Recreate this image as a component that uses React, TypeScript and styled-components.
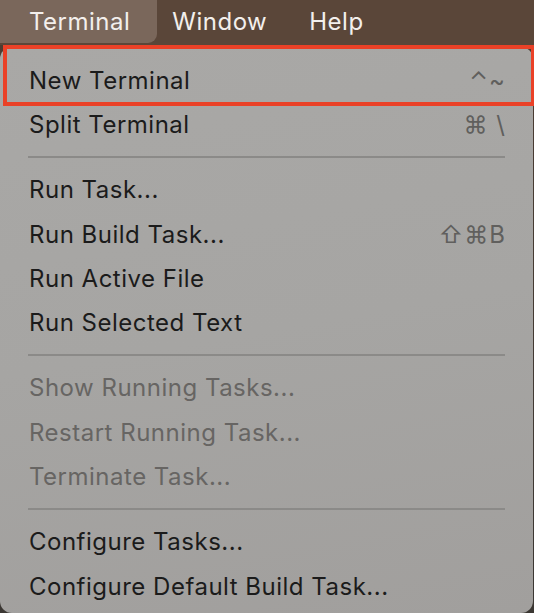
import React from "react";
import styled, { createGlobalStyle } from "styled-components";

const Global = createGlobalStyle`
  html, body { margin: 0; padding: 0; }
  body { background: #4a3b31; font-family: Inter, "Noto Sans", "DejaVu Sans", sans-serif; }
`;

const Page = styled.div`
  position: relative;
  width: 534px;
  height: 613px;
  overflow: hidden;
  display: flex;
  flex-direction: column;
  background: linear-gradient(180deg, #4d3d32 0%, #3b3733 100%);
`;

const MenuBar = styled.div`
  height: 45px;
  flex: none;
  display: flex;
  align-items: stretch;
  background: #5a4639;
`;

const BarItem = styled.div<{ $active?: boolean; $pad: string }>`
  display: flex;
  align-items: center;
  padding: ${(p) => p.$pad};
  height: 43px;
  font-size: 24px;
  color: #f3efec;
  letter-spacing: 0.5px;
  border-radius: 0 0 9px 0;
  background: ${(p) => (p.$active ? "#7a675b" : "transparent")};
`;

const Menu = styled.div`
  margin: 2px 1px 0 0;
  flex: 1;
  border-radius: 12px;
  background: linear-gradient(170deg, #a9a8a6 0%, #a6a5a3 50%, #a19f9d 100%);
  padding: 11px 0 0 0;
  display: flex;
  flex-direction: column;
`;

const Row = styled.div<{ $disabled?: boolean }>`
  height: 44.3px;
  flex: none;
  display: flex;
  align-items: center;
  justify-content: space-between;
  padding: 0 27px 0 29px;
  font-size: 24px;
  letter-spacing: 0.5px;
  color: ${(p) => (p.$disabled ? "#676563" : "#1b1b1b")};
`;

const Shortcut = styled.span`
  color: #605f5d;
  font-size: 24px;
  font-family: Inter, "DejaVu Sans", sans-serif;
  letter-spacing: 1px;
`;

const Separator = styled.div`
  height: 21px;
  flex: none;
  display: flex;
  align-items: center;
  padding: 0 28px;
  &::before {
    content: "";
    flex: 1;
    height: 2px;
    background: #8b8a88;
  }
`;

const Highlight = styled.div`
  position: absolute;
  left: 3px;
  top: 45px;
  width: 531px;
  height: 61px;
  box-sizing: border-box;
  border: 4px solid #ea4127;
  border-right-width: 3px;
  pointer-events: none;
`;

type Item = { label?: string; shortcut?: string; disabled?: boolean; sep?: boolean };

const items: Item[] = [
  { label: "New Terminal", shortcut: "⌃~" },
  { label: "Split Terminal", shortcut: "⌘ \\" },
  { sep: true },
  { label: "Run Task..." },
  { label: "Run Build Task...", shortcut: "⇧⌘B" },
  { label: "Run Active File" },
  { label: "Run Selected Text" },
  { sep: true },
  { label: "Show Running Tasks...", disabled: true },
  { label: "Restart Running Task...", disabled: true },
  { label: "Terminate Task...", disabled: true },
  { sep: true },
  { label: "Configure Tasks..." },
  { label: "Configure Default Build Task..." },
];

export default function App() {
  return (
    <Page>
      <Global />
      <MenuBar>
        <BarItem $active $pad="0 27px 0 29px">Terminal</BarItem>
        <BarItem $pad="0 21px 0 15px">Window</BarItem>
        <BarItem $pad="0 21px">Help</BarItem>
      </MenuBar>
      <Menu>
        {items.map((it, i) =>
          it.sep ? (
            <Separator key={i} />
          ) : (
            <Row key={i} $disabled={it.disabled}>
              <span>{it.label}</span>
              {it.shortcut && <Shortcut>{it.shortcut}</Shortcut>}
            </Row>
          )
        )}
      </Menu>
      <Highlight />
    </Page>
  );
}
